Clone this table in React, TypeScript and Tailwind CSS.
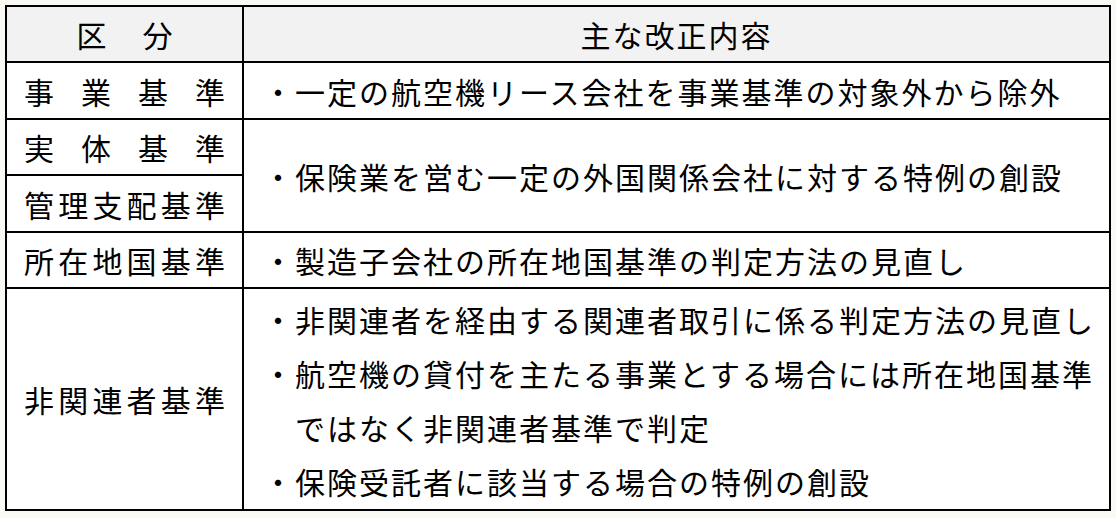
import React from "react";

const cellL = "flex items-center border-r-2 border-b-2 border-black px-[17px]";
const cellR = "flex items-center border-r-2 border-b-2 border-black pl-[19px]";

function Spread({ text }: { text: string }) {
  return (
    <div className="flex w-full justify-between">
      {Array.from(text).map((c, i) => (
        <span key={i}>{c}</span>
      ))}
    </div>
  );
}

export default function App() {
  return (
    <div className="w-[1116px] h-[518px] bg-[#faf9f4] pt-[5px] pl-[5px] font-['Noto_Sans_CJK_JP',sans-serif] text-[30px] text-black leading-none">
      <div className="grid grid-cols-[237px_867px] grid-rows-[56px_57px_56px_57px_56px_222px] border-l-2 border-t-2 border-black w-[1106px] bg-white">
        <div className="flex items-center justify-center gap-[36px] border-r-2 border-b-2 border-black bg-[#f2f2f2]">
          <span>区</span>
          <span>分</span>
        </div>
        <div className="flex items-center justify-center border-r-2 border-b-2 border-black bg-[#f2f2f2] tracking-[2px]">
          主な改正内容
        </div>

        <div className={cellL}>
          <Spread text="事業基準" />
        </div>
        <div className={cellR + " tracking-[2px] whitespace-nowrap"}>・一定の航空機リース会社を事業基準の対象外から除外</div>

        <div className={cellL}>
          <Spread text="実体基準" />
        </div>
        <div className={cellR + " row-span-2 tracking-[2px] whitespace-nowrap"}>・保険業を営む一定の外国関係会社に対する特例の創設</div>
        <div className={cellL}>
          <Spread text="管理支配基準" />
        </div>

        <div className={cellL}>
          <Spread text="所在地国基準" />
        </div>
        <div className={cellR + " tracking-[2px] whitespace-nowrap"}>・製造子会社の所在地国基準の判定方法の見直し</div>

        <div className={cellL}>
          <Spread text="非関連者基準" />
        </div>
        <div className="flex flex-col border-r-2 border-b-2 border-black pl-[19px] pt-[3px] tracking-[2px] whitespace-nowrap leading-[54px]">
          <div>・非関連者を経由する関連者取引に係る判定方法の見直し</div>
          <div>・航空機の貸付を主たる事業とする場合には所在地国基準</div>
          <div className="pl-[32px]">ではなく非関連者基準で判定</div>
          <div>・保険受託者に該当する場合の特例の創設</div>
        </div>
      </div>
    </div>
  );
}
